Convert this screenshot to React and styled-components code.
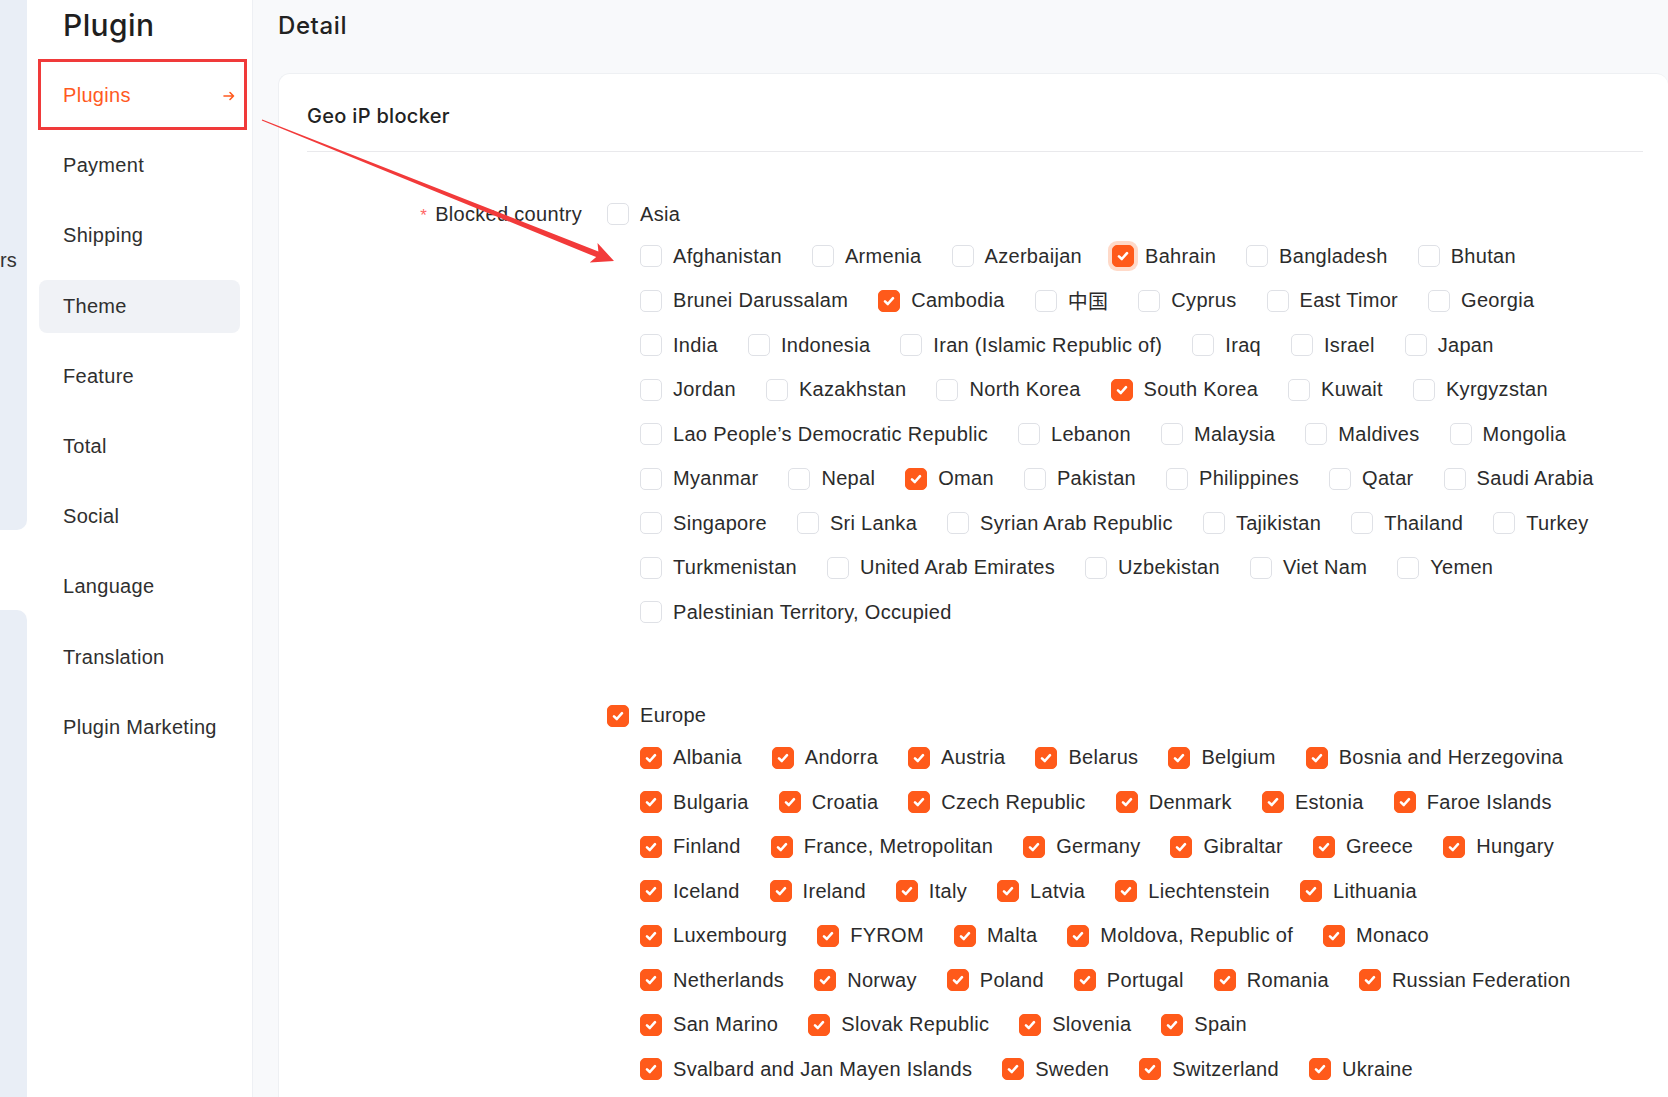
import React from 'react'
import styled, { createGlobalStyle } from 'styled-components'

// **** Global
const GlobalStyle = createGlobalStyle`
  html, body {
    margin: 0;
    padding: 0;
    height: 100%;
    overflow: hidden;
    background: #fff;
  }
  body {
    font-family: "Liberation Sans", Arial, "Noto Sans CJK SC", sans-serif;
    color: #2b2b2b;
  }
`

// **** Styled Components : Start
const Layout = styled.div`
  position: relative;
  display: flex;
  height: 1097px;
  overflow: hidden;
`

const Strip = styled.div`
  width: 27px;
  flex-shrink: 0;
  display: flex;
  flex-direction: column;
  gap: 80px;
`

const StripPanel = styled.div`
  background: #e9eef6;
  height: ${p => (p.$top ? '530px' : 'auto')};
  flex: ${p => (p.$top ? '0 0 auto' : '1')};
  border-radius: ${p => (p.$top ? '0 0 10px 0' : '0 10px 0 0')};
  padding-top: ${p => (p.$top ? '248px' : '0')};
  box-sizing: border-box;
`

const StripText = styled.span`
  display: block;
  white-space: nowrap;
  font-size: 20px;
  line-height: 24px;
  color: #333;
`

const Sidebar = styled.aside`
  width: 226px;
  flex-shrink: 0;
  background: #fff;
  border-right: 1px solid #eef0f4;
  padding: 5px 12px 0;
  box-sizing: border-box;
`

const SideTitle = styled.h1`
  margin: 0 0 24px 24px;
  font-family: Inter, "Noto Sans", sans-serif;
  font-weight: 500;
  font-size: 30px;
  line-height: 40px;
  letter-spacing: 0.4px;
  color: #1f1f1f;
`

const NavList = styled.nav`
  display: flex;
  flex-direction: column;
  gap: 17.2px;
`

const NavItem = styled.div`
  position: relative;
  height: 53px;
  display: flex;
  align-items: center;
  justify-content: space-between;
  padding: 0 5px 0 24px;
  border-radius: 8px;
  font-size: 20px;
  letter-spacing: 0.3px;
  color: ${p => (p.$active ? '#ff5a1f' : '#2f2f2f')};
  background: ${p => (p.$hover ? '#f0f2f6' : 'transparent')};
`

const Marker = styled.div`
  position: absolute;
  top: -10px;
  bottom: -8px;
  left: -1px;
  right: -7px;
  border: 3px solid #f03a3a;
  pointer-events: none;
`

const Main = styled.main`
  flex: 1;
  min-width: 0;
  background: #f8f9fb;
  padding: 10px 0 0 25px;
  box-sizing: border-box;
`

const PageTitle = styled.h2`
  margin: 0;
  font-family: Inter, "Noto Sans", sans-serif;
  font-weight: 500;
  font-size: 24px;
  line-height: 32px;
  letter-spacing: 0.6px;
  color: #222;
`

const Card = styled.section`
  margin-top: 31px;
  background: #fff;
  border: 1px solid #eef0f3;
  border-right: none;
  border-radius: 12px 12px 0 0;
  padding: 0 25px 0 28px;
  height: 1100px;
`

const CardHeader = styled.div`
  padding: 30px 0 23px;
  border-bottom: 1px solid #e9e9ec;
  font-family: Inter, "Noto Sans", sans-serif;
  font-weight: 500;
  font-size: 20px;
  line-height: 24px;
  letter-spacing: 0.3px;
  color: #222;
`

const Form = styled.div`
  display: grid;
  grid-template-columns: 275px 1fr;
  column-gap: 25px;
  padding-top: 42px;
`

const Label = styled.div`
  text-align: right;
  font-size: 20px;
  line-height: 41px;
  letter-spacing: 0.3px;
  color: #2b2b2b;
  white-space: nowrap;
`

const Required = styled.span`
  color: #ff6666;
  font-size: 17px;
  margin-right: 8px;
`

const Group = styled.div`
  margin-bottom: 61px;
`

const GroupHeader = styled.div`
  height: 40px;
  display: flex;
  align-items: center;
`

const Children = styled.div`
  margin-left: 33px;
`

const Row = styled.div`
  height: 44.5px;
  display: flex;
  align-items: center;
`

const Option = styled.label`
  display: flex;
  align-items: center;
  gap: 11px;
  margin-right: 30px;
  font-size: 20px;
  letter-spacing: 0.3px;
  color: #2b2b2b;
  white-space: nowrap;
`

const Box = styled.span`
  width: 22px;
  height: 22px;
  box-sizing: border-box;
  border-radius: 5px;
  display: flex;
  align-items: center;
  justify-content: center;
  background: ${p => (p.$checked ? '#ff5a1a' : '#fff')};
  border: 1px solid ${p => (p.$checked ? '#ff5a1a' : '#dfe1e6')};
  box-shadow: ${p => (p.$focus ? '0 0 0 4px #ffdac9' : 'none')};
`

const ArrowLayer = styled.svg`
  position: absolute;
  left: 0;
  top: 0;
  width: 1668px;
  height: 1097px;
  pointer-events: none;
`
// **** Styled Components : End

const navItems = ['Plugins', 'Payment', 'Shipping', 'Theme', 'Feature', 'Total', 'Social', 'Language', 'Translation', 'Plugin Marketing']

const groups = [
  {
    name: 'Asia',
    checked: false,
    rows: [
      ['Afghanistan', 'Armenia', 'Azerbaijan', 'Bahrain', 'Bangladesh', 'Bhutan'],
      ['Brunei Darussalam', 'Cambodia', '中国', 'Cyprus', 'East Timor', 'Georgia'],
      ['India', 'Indonesia', 'Iran (Islamic Republic of)', 'Iraq', 'Israel', 'Japan'],
      ['Jordan', 'Kazakhstan', 'North Korea', 'South Korea', 'Kuwait', 'Kyrgyzstan'],
      ['Lao People’s Democratic Republic', 'Lebanon', 'Malaysia', 'Maldives', 'Mongolia'],
      ['Myanmar', 'Nepal', 'Oman', 'Pakistan', 'Philippines', 'Qatar', 'Saudi Arabia'],
      ['Singapore', 'Sri Lanka', 'Syrian Arab Republic', 'Tajikistan', 'Thailand', 'Turkey'],
      ['Turkmenistan', 'United Arab Emirates', 'Uzbekistan', 'Viet Nam', 'Yemen'],
      ['Palestinian Territory, Occupied'],
    ],
  },
  {
    name: 'Europe',
    checked: true,
    rows: [
      ['Albania', 'Andorra', 'Austria', 'Belarus', 'Belgium', 'Bosnia and Herzegovina'],
      ['Bulgaria', 'Croatia', 'Czech Republic', 'Denmark', 'Estonia', 'Faroe Islands'],
      ['Finland', 'France, Metropolitan', 'Germany', 'Gibraltar', 'Greece', 'Hungary'],
      ['Iceland', 'Ireland', 'Italy', 'Latvia', 'Liechtenstein', 'Lithuania'],
      ['Luxembourg', 'FYROM', 'Malta', 'Moldova, Republic of', 'Monaco'],
      ['Netherlands', 'Norway', 'Poland', 'Portugal', 'Romania', 'Russian Federation'],
      ['San Marino', 'Slovak Republic', 'Slovenia', 'Spain'],
      ['Svalbard and Jan Mayen Islands', 'Sweden', 'Switzerland', 'Ukraine'],
    ],
  },
]

const picked = new Set(['Bahrain', 'Cambodia', 'South Korea', 'Oman'])

const Tick = () => (
  <svg width="14" height="14" viewBox="0 0 14 14">
    <path d="M3 7.4 L5.8 10 L11 4.2" fill="none" stroke="#fff" strokeWidth="2.6" strokeLinecap="round" strokeLinejoin="round" />
  </svg>
)

const Check = ({ label, checked, focus }) => (
  <Option>
    <Box $checked={checked} $focus={focus}>{checked && <Tick />}</Box>
    {label}
  </Option>
)

const App = () => {
  return (
    <>
      <GlobalStyle />
      <Layout>
        <Strip>
          <StripPanel $top>
            <StripText>rs</StripText>
          </StripPanel>
          <StripPanel />
        </Strip>

        <Sidebar>
          <SideTitle>Plugin</SideTitle>
          <NavList>
            {navItems.map((item, index) => (
              <NavItem key={item} $active={index === 0} $hover={item === 'Theme'}>
                {item}
                {index === 0 && (
                  <>
                    <svg width="12" height="10" viewBox="0 0 12 10">
                      <path d="M1 5 H10.5 M7 1.5 L10.5 5 L7 8.5" fill="none" stroke="#ff5a1f" strokeWidth="1.6" strokeLinecap="round" strokeLinejoin="round" />
                    </svg>
                    <Marker />
                  </>
                )}
              </NavItem>
            ))}
          </NavList>
        </Sidebar>

        <Main>
          <PageTitle>Detail</PageTitle>
          <Card>
            <CardHeader>Geo iP blocker</CardHeader>
            <Form>
              <Label><Required>*</Required>Blocked country</Label>
              <div>
                {groups.map(group => (
                  <Group key={group.name}>
                    <GroupHeader>
                      <Check label={group.name} checked={group.checked} />
                    </GroupHeader>
                    <Children>
                      {group.rows.map((row, index) => (
                        <Row key={index}>
                          {row.map(country => (
                            <Check
                              key={country}
                              label={country}
                              checked={group.checked || picked.has(country)}
                              focus={country === 'Bahrain'}
                            />
                          ))}
                        </Row>
                      ))}
                    </Children>
                  </Group>
                ))}
              </div>
            </Form>
          </Card>
        </Main>

        <ArrowLayer viewBox="0 0 1668 1097">
          <polygon
            points="614,261 589.7,262.6 596.2,257.1 261.8,120.6 262.2,119.4 598.4,251.5 597.5,243 614,261"
            fill="#f23a3a"
          />
        </ArrowLayer>
      </Layout>
    </>
  )
}

export default App
